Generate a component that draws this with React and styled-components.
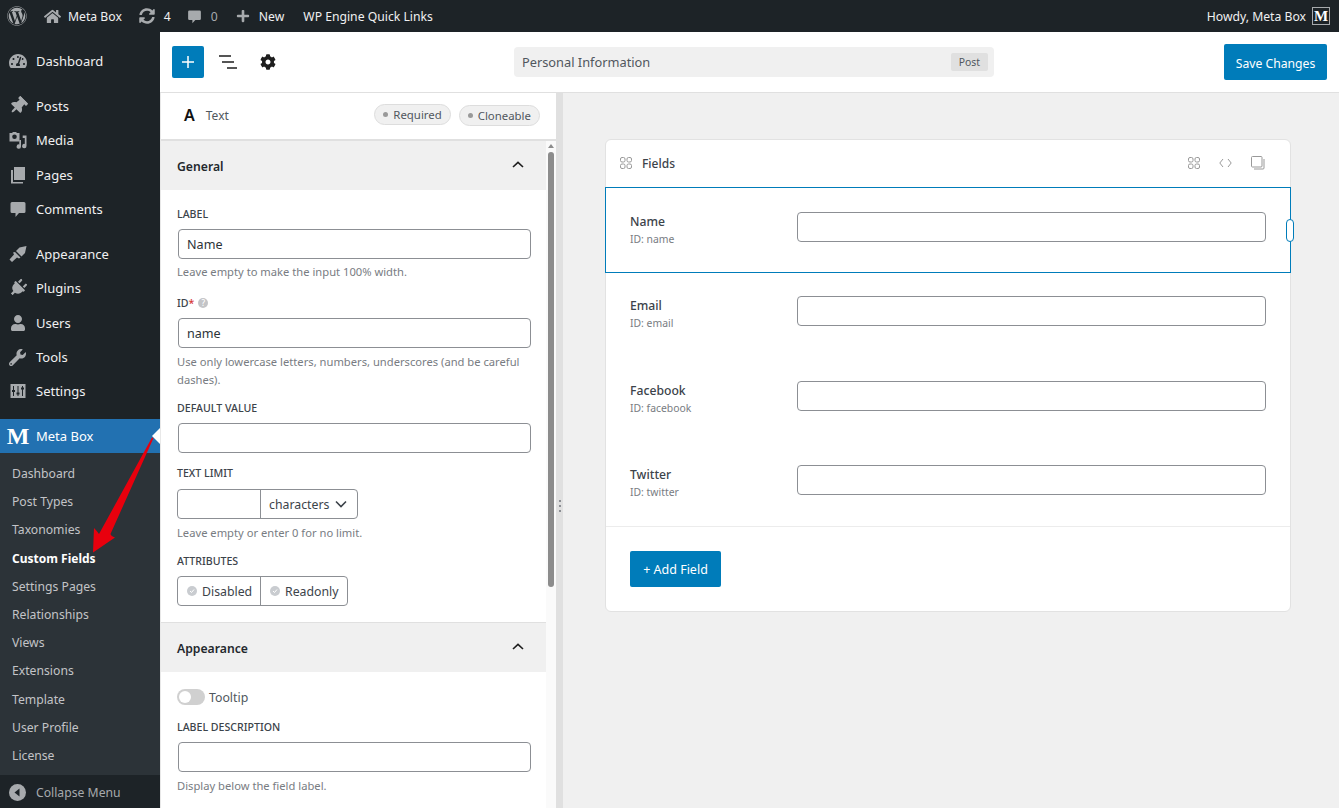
import React from "react";
import styled, { createGlobalStyle } from "styled-components";
import {
  FaWordpress,
  FaHome,
  FaSyncAlt,
  FaPlus,
  FaTachometerAlt,
  FaThumbtack,
  FaPlug,
  FaUser,
  FaWrench,
  FaCog,
} from "react-icons/fa";

const GlobalStyle = createGlobalStyle`
  html, body {
    margin: 0;
    padding: 0;
    height: 100%;
    overflow: hidden;
    background: #f0f0f0;
    font-family: "Noto Sans", "Open Sans", Arial, sans-serif;
    font-size: 13px;
    color: #3c434a;
  }
  * { box-sizing: border-box; }
`;

const Page = styled.div`
  position: relative;
  display: grid;
  grid-template-rows: 32px 1fr;
  grid-template-columns: 160px 1fr;
  height: 808px;
  overflow: hidden;
`;

/* top admin bar */
const AdminBar = styled.div`
  grid-column: 1 / 3;
  display: flex;
  align-items: center;
  background: #1d2327;
  color: #f0f0f1;
  font-size: 12.2px;
  padding: 0 9px 0 7px;
`;

const BarItem = styled.div`
  display: flex;
  align-items: center;
  gap: ${(props) => props.$gap || 7}px;
  margin-left: ${(props) => props.$left || 0}px;
  color: ${(props) => (props.$dim ? "#a7aaad" : "#f0f0f1")};
  svg {
    color: #a7aaad;
    display: block;
  }
`;

const Howdy = styled.div`
  margin-left: auto;
  display: flex;
  align-items: center;
  gap: 6px;
`;

const Avatar = styled.span`
  width: 18px;
  height: 18px;
  border: 1px solid #a7aaad;
  background: #1d2327;
  color: #fff;
  font-family: "Liberation Serif", serif;
  font-weight: 700;
  font-size: 15px;
  line-height: 16px;
  text-align: center;
`;

/* left wordpress menu */
const Sidebar = styled.nav`
  background: #1d2327;
  display: flex;
  flex-direction: column;
  padding-top: 12px;
`;

const MenuItem = styled.div`
  display: flex;
  align-items: center;
  height: 34.4px;
  flex: none;
  margin-bottom: ${(props) => props.$gap || 0}px;
  color: #f0f0f1;
  font-size: 13px;
`;

const MenuIcon = styled.span`
  width: 36px;
  flex: none;
  display: flex;
  justify-content: center;
  padding-right: 1px;
  color: #a7aaad;
  svg {
    display: block;
    transform: ${(props) => props.$turn ? `rotate(${props.$turn}deg)` : "none"};
  }
`;

const ActiveItem = styled.div`
  position: relative;
  display: flex;
  align-items: center;
  height: 34px;
  flex: none;
  background: #2271b1;
  color: #fff;
  &::after {
    content: "";
    position: absolute;
    right: 0;
    top: 9px;
    border: 8px solid transparent;
    border-right-color: #fff;
  }
`;

const MetaLogo = styled.span`
  width: 36px;
  flex: none;
  text-align: center;
  font-family: "Liberation Serif", serif;
  font-weight: 700;
  font-size: 24px;
  line-height: 34px;
  color: #fff;
`;

const SubMenu = styled.div`
  background: #2c3338;
  padding: 7px 0 5px;
  flex: none;
`;

const SubItem = styled.div`
  height: 28.2px;
  line-height: 28px;
  padding-left: 12px;
  font-size: ${(props) => (props.$current ? 12 : 12.2)}px;
  color: ${(props) => (props.$current ? "#fff" : "#c3c4c7")};
  font-weight: ${(props) => (props.$current ? 700 : 400)};
`;

const Collapse = styled.div`
  display: flex;
  align-items: center;
  flex: 1;
  padding-top: 1px;
  color: #a7aaad;
  font-size: 12.2px;
`;

const RedArrow = styled.svg`
  position: absolute;
  left: 0;
  top: 0;
  pointer-events: none;
`;

/* editor */
const Editor = styled.div`
  display: flex;
  flex-direction: column;
  min-width: 0;
  min-height: 0;
`;

const Toolbar = styled.div`
  flex: none;
  height: 61px;
  background: #fff;
  border-bottom: 1px solid #e0e0e0;
  display: grid;
  grid-template-columns: 354px 480px 1fr;
  align-items: center;
`;

const ToolGroup = styled.div`
  display: flex;
  align-items: center;
  padding-left: 12px;
  svg {
    display: block;
  }
`;

const AddButton = styled.button`
  width: 32px;
  height: 32px;
  border: 0;
  border-radius: 2px;
  background: #007cba;
  color: #fff;
  padding: 0;
  display: flex;
  align-items: center;
  justify-content: center;
  margin-right: 15px;
`;

const GearSlot = styled.span`
  margin-left: 23px;
  color: #1e1e1e;
`;

const TitleBox = styled.div`
  height: 30px;
  background: #f0f0f0;
  border-radius: 4px;
  display: flex;
  align-items: center;
  justify-content: space-between;
  padding: 0 6px 0 8px;
  color: #50575e;
  font-size: 12.8px;
`;

const TypeBadge = styled.span`
  height: 18px;
  line-height: 18px;
  padding: 0 8px;
  background: #e0e0e0;
  border-radius: 2px;
  font-size: 10.4px;
  color: #50575e;
`;

const SaveButton = styled.button`
  justify-self: end;
  margin-right: 12px;
  width: 103px;
  height: 36px;
  border: 0;
  border-radius: 2px;
  background: #007cba;
  color: #fff;
  font-family: inherit;
  font-size: 12.2px;
  padding: 2px 0 0;
`;

const Workspace = styled.div`
  flex: 1;
  min-height: 0;
  display: grid;
  grid-template-columns: 396px 7px 1fr;
`;

const SidePanel = styled.aside`
  display: flex;
  flex-direction: column;
  min-height: 0;
  background: #fff;
  border-left: 1px solid #e8e8e8;
`;

const FieldType = styled.div`
  flex: none;
  height: 48px;
  display: flex;
  align-items: center;
  border-bottom: 2px solid #e0e0e0;
  padding: 0 16px 2px 23px;
  color: #50575e;
  font-size: 12px;
`;

const TypeGlyph = styled.span`
  font-size: 16px;
  font-weight: 600;
  color: #111;
  margin-right: 11px;
  margin-right: 11px;
`;

const PillRow = styled.div`
  margin-left: auto;
  display: flex;
  gap: 8px;
`;

const Pill = styled.span`
  display: inline-flex;
  align-items: center;
  gap: 5px;
  height: 21px;
  padding: 0 8px;
  margin-top: ${(props) => props.$top || 0}px;
  background: #f0f0f0;
  border: 1px solid #ddd;
  border-radius: 11px;
  font-size: 11.4px;
  color: #50575e;
  &::before {
    content: "";
    width: 5px;
    height: 5px;
    border-radius: 50%;
    background: #999;
  }
`;

const PanelFrame = styled.div`
  flex: 1;
  min-height: 0;
  display: flex;
`;

const PanelScroll = styled.div`
  flex: 1;
  min-width: 0;
  overflow: hidden;
`;

const ScrollTrack = styled.div`
  width: 10px;
  flex: none;
  background: #fafafa;
  display: flex;
  flex-direction: column;
  align-items: center;
  padding-top: 3px;
  &::before {
    content: "";
    border: 3px solid transparent;
    border-top: 0;
    border-bottom: 4px solid #8c8c8c;
    margin-bottom: 4px;
  }
`;

const ScrollThumb = styled.div`
  width: 6px;
  height: 435px;
  background: #8c8c8c;
  border-radius: 3px;
`;

const SectionHead = styled.div`
  height: 49px;
  background: #f0f0f0;
  display: flex;
  align-items: center;
  justify-content: space-between;
  padding: 1px 22px 0 16px;
  font-size: 12.2px;
  font-weight: 600;
  color: #23282d;
  svg {
    display: block;
    margin-top: -3px;
  }
`;

const SectionBody = styled.div`
  padding: 16px 15px ${(props) => (props.$last ? 15 : 16)}px 16px;
  border-bottom: ${(props) => (props.$last ? "0" : "1px solid #e0e0e0")};
`;

const FieldLabel = styled.div`
  display: flex;
  align-items: center;
  gap: 4px;
  height: 16px;
  font-size: 10.6px;
  font-weight: 500;
  text-transform: ${(props) => (props.$plain ? "none" : "uppercase")};
  color: #3c434a;
  margin-top: ${(props) => props.$above || 0}px;
  margin-bottom: ${(props) => props.$below ?? 7}px;
`;

const Star = styled.span`
  color: #d63638;
  margin-left: -4px;
`;

const HelpDot = styled.span`
  width: 10px;
  height: 10px;
  border-radius: 50%;
  background: #c3c4c7;
  color: #fff;
  font-size: 8px;
  line-height: 10px;
  text-align: center;
`;

const TextBox = styled.input`
  display: block;
  width: ${(props) => props.$width || "353px"};
  margin-left: ${(props) => (props.$flush ? 0 : "1px")};
  height: 30px;
  border: 1px solid #8c8f94;
  border-radius: 4px;
  padding: 0 8px;
  background: #fff;
  font-family: inherit;
  font-size: 12.6px;
  color: #2c3338;
  outline: none;
`;

const Help = styled.p`
  margin: ${(props) => props.$above ?? 4}px 0 ${(props) => props.$below ?? 14}px;
  font-size: 11.2px;
  line-height: 18px;
  color: #787c82;
`;

const Joined = styled.div`
  display: inline-flex;
  height: 30px;
  border: 1px solid #8c8f94;
  border-radius: 4px;
  overflow: hidden;
  vertical-align: top;
`;

const JoinedCell = styled.div`
  width: ${(props) => props.$width}px;
  display: flex;
  align-items: center;
  gap: ${(props) => props.$gap || 4}px;
  padding-left: ${(props) => props.$pad || 0}px;
  font-size: 12.3px;
  color: #3c434a;
  & + & {
    border-left: 1px solid #8c8f94;
  }
`;

const CheckDot = styled.span`
  width: 10px;
  height: 10px;
  border-radius: 50%;
  background: #c9ccd0;
  flex: none;
  display: flex;
  align-items: center;
  justify-content: center;
  svg {
    display: block;
  }
`;

const ToggleRow = styled.div`
  display: flex;
  align-items: center;
  gap: 4px;
  height: 16px;
  margin-top: 1px;
  margin-bottom: 14px;
  font-size: 12.3px;
  color: #50575e;
`;

const Toggle = styled.span`
  width: 28px;
  height: 16px;
  border-radius: 8px;
  background: #d0d0d0;
  display: flex;
  align-items: center;
  padding-left: 2px;
  &::before {
    content: "";
    width: 12px;
    height: 12px;
    border-radius: 50%;
    background: #fff;
  }
`;

const Splitter = styled.div`
  background: #e0e0e0;
  display: flex;
  flex-direction: column;
  align-items: center;
  gap: 3px;
  padding-top: 407px;
  padding-left: 1px;
  i {
    display: block;
    width: 2px;
    height: 2px;
    background: #8c8f94;
  }
`;

const Canvas = styled.main`
  background: #f0f0f0;
  padding: 46px 0 0 42px;
`;

const Card = styled.section`
  width: 686px;
  height: 473px;
  background: #fff;
  border: 1px solid #e2e2e2;
  border-radius: 6px;
`;

const CardHead = styled.div`
  height: 47px;
  display: flex;
  align-items: center;
  padding: 0 25px 1px 14px;
  font-size: 12px;
  font-weight: 500;
  color: #3c434a;
  svg {
    display: block;
    color: #999;
  }
`;

const CardTitle = styled.span`
  margin-left: 10px;
  margin-right: auto;
`;

const HeadIcons = styled.div`
  display: flex;
  align-items: center;
  gap: 19px;
`;

const FieldRow = styled.div`
  position: relative;
  height: ${(props) => props.$height}px;
  margin: 0 -1px ${(props) => (props.$selected ? -2 : 0)}px;
  border: 1px solid ${(props) => (props.$selected ? "#007cba" : "transparent")};
  display: flex;
  align-items: flex-start;
  padding: 24px 24px 0 24px;
`;

const RowInfo = styled.div`
  width: 167px;
  flex: none;
  padding-top: 1px;
`;

const RowName = styled.div`
  font-size: 12.2px;
  font-weight: 500;
  line-height: 18px;
  color: #3c434a;
`;

const RowId = styled.div`
  font-size: 10.4px;
  line-height: 17px;
  color: #787c82;
`;

const ResizeHandle = styled.span`
  position: absolute;
  right: -4px;
  top: 31px;
  width: 8px;
  height: 23px;
  background: #fff;
  border: 1px solid #007cba;
  border-radius: 4px;
`;

const CardFoot = styled.div`
  border-top: 1px solid #ececec;
  padding: 24px;
`;

const AddField = styled.button`
  width: 91px;
  height: 36px;
  border: 0;
  border-radius: 2px;
  background: #007cba;
  color: #fff;
  font-family: inherit;
  font-size: 12.5px;
  padding: 0;
`;

const Bubble = ({ size = 20 }) => (
  <svg width={size} height={size} viewBox="0 0 20 20" fill="currentColor">
    <path d="M4 3h12a1.5 1.5 0 0 1 1.5 1.5v8A1.5 1.5 0 0 1 16 14h-5l-3.5 4v-4H4a1.5 1.5 0 0 1-1.5-1.5v-8A1.5 1.5 0 0 1 4 3z" />
  </svg>
);

const MediaIcon = () => (
  <svg width="20" height="20" viewBox="0 0 20 20" fill="currentColor">
    <path
      fillRule="evenodd"
      d="M1.500 3h2.500l1-1h3l1 1h2.500v8.500H1.500zM6.500 4.500a2.300 2.300 0 1 0 0 4.600a2.300 2.300 0 0 0 0-4.600z"
    />
    <path d="M13 5.500h5.500V16a2.200 2.200 0 1 1-1.700-2.100V8h-2.100v-2.500h-1.700z" />
    <path d="M13 10v6.500a2.200 2.200 0 1 1-1.700-2.100V10z" />
  </svg>
);

const PagesIcon = () => (
  <svg width="20" height="20" viewBox="0 0 20 20" fill="currentColor">
    <path d="M6 2h11v13H6z" />
    <path d="M3 5h2v12h10v1.500H3z" />
  </svg>
);

const BrushIcon = () => (
  <svg width="20" height="20" viewBox="0 0 20 20" fill="currentColor">
    <path d="M18.500 2l-1.500 7-3.500 3.500L8 7l3.500-3.500z" />
    <path d="M7 8l5.500 5.500-1.500 1-2-1-5 4.500-2.500-2.500 4.500-5-1-2z" />
  </svg>
);

const SettingsIcon = () => (
  <svg width="20" height="20" viewBox="0 0 20 20" fill="currentColor">
    <path
      fillRule="evenodd"
      d="M2.500 3h15v14h-15zM5 5v4H4v2h1v4h1v-4h1V9H6V5zM9.500 5v6.500h-1v2h1V15h1v-1.500h1v-2h-1V5zM14 5v1.500h-1v2h1V15h1V8.500h1v-2h-1V5z"
    />
  </svg>
);

const CollapseIcon = () => (
  <svg width="17" height="17" viewBox="0 0 17 17">
    <circle cx="8.500" cy="8.500" r="8.500" fill="#a7aaad" />
    <path d="M10.500 4.500v8l-5-4z" fill="#1d2327" />
  </svg>
);

const ListIcon = () => (
  <svg width="18" height="14" viewBox="0 0 18 14" stroke="#1e1e1e" strokeWidth="1.500">
    <path d="M0 1h12M3 7h12M8 13h10" />
  </svg>
);

const Rings = () => (
  <svg width="12" height="12" viewBox="0 0 12 12" fill="none" stroke="currentColor" strokeWidth="1">
    <rect x="0.500" y="0.500" width="4.500" height="4.500" rx="1.500" />
    <rect x="7" y="0.500" width="4.500" height="4.500" rx="1.500" />
    <rect x="0.500" y="7" width="4.500" height="4.500" rx="1.500" />
    <rect x="7" y="7" width="4.500" height="4.500" rx="1.500" />
  </svg>
);

const CodeIcon = () => (
  <svg width="13" height="10" viewBox="0 0 13 10" fill="none" stroke="currentColor" strokeWidth="1">
    <path d="M4 1L0.800 5L4 9M9 1l3.200 4L9 9" />
  </svg>
);

const CopyIcon = () => (
  <svg width="14" height="14" viewBox="0 0 14 14" fill="none" stroke="currentColor" strokeWidth="1">
    <rect x="0.500" y="0.500" width="10.500" height="10.500" rx="1" />
    <path d="M13 3v9a1 1 0 0 1-1 1H3" />
  </svg>
);

const ChevronUp = () => (
  <svg width="12" height="7" viewBox="0 0 12 7" fill="none" stroke="#1e1e1e" strokeWidth="1.600">
    <path d="M1 6l5-4.700L11 6" />
  </svg>
);

const ChevronDown = () => (
  <svg width="12" height="8" viewBox="0 0 12 8" fill="none" stroke="#3c434a" strokeWidth="1.600">
    <path d="M1 1.500l5 5 5-5" />
  </svg>
);

const Tick = () => (
  <svg width="6" height="6" viewBox="0 0 6 6" fill="none" stroke="#fff" strokeWidth="1">
    <path d="M1 3l1.500 1.500L5 1.500" />
  </svg>
);

const menuGroups = [
  [{ label: "Dashboard", icon: <FaTachometerAlt size={18} /> }],
  [
    { label: "Posts", icon: <FaThumbtack size={18} />, turn: 45 },
    { label: "Media", icon: <MediaIcon /> },
    { label: "Pages", icon: <PagesIcon /> },
    { label: "Comments", icon: <Bubble /> },
  ],
  [
    { label: "Appearance", icon: <BrushIcon /> },
    { label: "Plugins", icon: <FaPlug size={18} />, turn: 45 },
    { label: "Users", icon: <FaUser size={16} /> },
    { label: "Tools", icon: <FaWrench size={17} /> },
    { label: "Settings", icon: <SettingsIcon /> },
  ],
];

const subItems = [
  "Dashboard",
  "Post Types",
  "Taxonomies",
  "Custom Fields",
  "Settings Pages",
  "Relationships",
  "Views",
  "Extensions",
  "Template",
  "User Profile",
  "License",
];

const fields = [
  { name: "Name", id: "name", selected: true, height: 86 },
  { name: "Email", id: "email", height: 85 },
  { name: "Facebook", id: "facebook", height: 84 },
  { name: "Twitter", id: "twitter", height: 86 },
];

const App = () => {
  return (
    <Page>
      <GlobalStyle />
      <AdminBar>
        <BarItem>
          <FaWordpress size={20} />
        </BarItem>
        <BarItem $left={17} $gap={7}>
          <FaHome size={17} />
          Meta Box
        </BarItem>
        <BarItem $left={17} $gap={9}>
          <FaSyncAlt size={16} />
          4
        </BarItem>
        <BarItem $left={15} $gap={8} $dim>
          <Bubble size={17} />0
        </BarItem>
        <BarItem $left={18} $gap={9}>
          <FaPlus size={14} />
          New
        </BarItem>
        <BarItem $left={19}>WP Engine Quick Links</BarItem>
        <Howdy>
          Howdy, Meta Box
          <Avatar>M</Avatar>
        </Howdy>
      </AdminBar>

      <Sidebar>
        {menuGroups.map((group) =>
          group.map((item, j) => (
            <MenuItem key={item.label} $gap={j === group.length - 1 ? 10.4 : 0}>
              <MenuIcon $turn={item.turn}>{item.icon}</MenuIcon>
              {item.label}
            </MenuItem>
          ))
        )}
        <ActiveItem>
          <MetaLogo>M</MetaLogo>
          Meta Box
        </ActiveItem>
        <SubMenu>
          {subItems.map((label) => (
            <SubItem key={label} $current={label === "Custom Fields"}>
              {label}
            </SubItem>
          ))}
        </SubMenu>
        <Collapse>
          <MenuIcon>
            <CollapseIcon />
          </MenuIcon>
          Collapse Menu
        </Collapse>
      </Sidebar>

      <Editor>
        <Toolbar>
          <ToolGroup>
            <AddButton>
              <svg width="14" height="14" viewBox="0 0 14 14" stroke="#fff" strokeWidth="1.500">
                <path d="M7 1v12M1 7h12" />
              </svg>
            </AddButton>
            <ListIcon />
            <GearSlot>
              <FaCog size={16} />
            </GearSlot>
          </ToolGroup>
          <TitleBox>
            Personal Information
            <TypeBadge>Post</TypeBadge>
          </TitleBox>
          <SaveButton>Save Changes</SaveButton>
        </Toolbar>

        <Workspace>
          <SidePanel>
            <FieldType>
              <TypeGlyph>A</TypeGlyph>
              Text
              <PillRow>
                <Pill>Required</Pill>
                <Pill $top={1}>Cloneable</Pill>
              </PillRow>
            </FieldType>
            <PanelFrame>
              <PanelScroll>
                <SectionHead>
                  General
                  <ChevronUp />
                </SectionHead>
                <SectionBody>
                  <FieldLabel>Label</FieldLabel>
                  <TextBox defaultValue="Name" />
                  <Help>Leave empty to make the input 100% width.</Help>
                  <FieldLabel $plain>
                    ID<Star>*</Star>
                    <HelpDot>?</HelpDot>
                  </FieldLabel>
                  <TextBox defaultValue="name" />
                  <Help $above={5} $below={11}>
                    Use only lowercase letters, numbers, underscores (and be careful dashes).
                  </Help>
                  <FieldLabel>Default value</FieldLabel>
                  <TextBox />
                  <FieldLabel $above={12} $below={8}>Text limit</FieldLabel>
                  <Joined>
                    <JoinedCell $width={82} />
                    <JoinedCell $width={97} $pad={8} $gap={6}>
                      characters
                      <ChevronDown />
                    </JoinedCell>
                  </Joined>
                  <Help $above={5} $below={11}>Leave empty or enter 0 for no limit.</Help>
                  <FieldLabel>Attributes</FieldLabel>
                  <Joined>
                    <JoinedCell $width={82} $pad={9} $gap={5}>
                      <CheckDot><Tick /></CheckDot>
                      Disabled
                    </JoinedCell>
                    <JoinedCell $width={87} $pad={9} $gap={5}>
                      <CheckDot><Tick /></CheckDot>
                      Readonly
                    </JoinedCell>
                  </Joined>
                </SectionBody>
                <SectionHead>
                  Appearance
                  <ChevronUp />
                </SectionHead>
                <SectionBody $last>
                  <ToggleRow>
                    <Toggle />
                    Tooltip
                  </ToggleRow>
                  <FieldLabel>Label description</FieldLabel>
                  <TextBox />
                  <Help $above={5}>Display below the field label.</Help>
                </SectionBody>
              </PanelScroll>
              <ScrollTrack>
                <ScrollThumb />
              </ScrollTrack>
            </PanelFrame>
          </SidePanel>

          <Splitter>
            <i />
            <i />
            <i />
          </Splitter>

          <Canvas>
            <Card>
              <CardHead>
                <Rings />
                <CardTitle>Fields</CardTitle>
                <HeadIcons>
                  <Rings />
                  <CodeIcon />
                  <CopyIcon />
                </HeadIcons>
              </CardHead>
              {fields.map((field) => (
                <FieldRow key={field.id} $selected={field.selected} $height={field.height}>
                  <RowInfo>
                    <RowName>{field.name}</RowName>
                    <RowId>ID: {field.id}</RowId>
                  </RowInfo>
                  <TextBox $flush $width="469px" />
                  {field.selected && <ResizeHandle />}
                </FieldRow>
              ))}
              <CardFoot>
                <AddField>+ Add Field</AddField>
              </CardFoot>
            </Card>
          </Canvas>
        </Workspace>
      </Editor>

      <RedArrow width="160" height="808" viewBox="0 0 160 808">
        <path
          d="M153.500 438L110.500 534Q111 536 115 537.500L93 552.500L94 528Q97 531 99 534L152 437.500z"
          fill="#e8000d"
        />
      </RedArrow>
    </Page>
  );
};

export default App;
